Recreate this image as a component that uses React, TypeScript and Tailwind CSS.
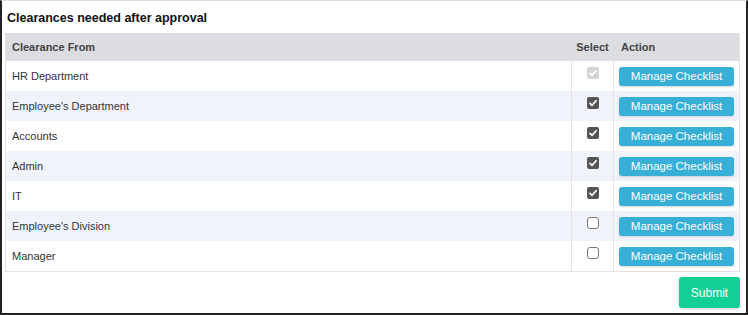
import React from "react";

type Row = { name: string; state: "disabled" | "checked" | "unchecked" };

const rows: Row[] = [
  { name: "HR Department", state: "disabled" },
  { name: "Employee's Department", state: "checked" },
  { name: "Accounts", state: "checked" },
  { name: "Admin", state: "checked" },
  { name: "IT", state: "checked" },
  { name: "Employee's Division", state: "unchecked" },
  { name: "Manager", state: "unchecked" },
];

function Box({ state }: { state: Row["state"] }) {
  if (state === "unchecked") {
    return <span className="block w-[12px] h-[12px] rounded-[3px] border border-[#777] bg-white" />;
  }
  const bg = state === "disabled" ? "bg-[#d4d4d4]" : "bg-[#555555]";
  return (
    <span className={`flex items-center justify-center w-[12px] h-[12px] rounded-[2px] ${bg}`}>
      <svg width="10" height="10" viewBox="0 0 10 10">
        <path d="M2 5.3 L4.1 7.3 L8.1 2.7" fill="none" stroke="white" strokeWidth="1.7" strokeLinecap="round" strokeLinejoin="round" />
      </svg>
    </span>
  );
}

export default function App() {
  return (
    <div
      className="w-[748px] h-[315px] bg-white border-l-2 border-r-2 border-b-2 border-t border-l-[#222] border-r-[#222] border-b-[#222] border-t-[#ddd] flex flex-col text-[#333]"
      style={{ fontFamily: '"Liberation Sans", Arial, sans-serif' }}
    >
      <div className="pl-[5px] pt-[10px] h-[32px] text-[12.5px] font-bold text-[#111] leading-[15px]">
        Clearances needed after approval
      </div>
      <div className="ml-[3px] w-[735px] border border-[#e3e3e3] border-t-0">
        <div className="flex h-[28px] bg-[#dcdde1] text-[11px] font-bold text-[#444] items-center">
          <div className="w-[565px] pl-[6px]">Clearance From</div>
          <div className="w-[43px] text-center">Select</div>
          <div className="flex-1 pl-[7px]">Action</div>
        </div>
        {rows.map((r, i) => (
          <div key={r.name} className={`flex h-[30px] text-[11px] ${i % 2 === 1 ? "bg-[#f0f3fa]" : "bg-white"}`}>
            <div className="w-[565px] pl-[6px] flex items-center">{r.name}</div>
            <div className="w-[43px] border-l border-r border-[#e3e3e3] flex justify-center pt-[6px]">
              <Box state={r.state} />
            </div>
            <div className="flex-1 pl-[5px] flex items-center">
              <button className="w-[115px] h-[19px] rounded-[3px] bg-[#38afd6] text-white text-[11.5px] leading-[19px] shadow-[0_1px_2px_rgba(0,0,0,0.15)]">
                Manage Checklist
              </button>
            </div>
          </div>
        ))}
      </div>
      <div className="flex justify-end pr-[6px] pt-[5px]">
        <button className="w-[61px] h-[31px] rounded-[3px] bg-[#12cf95] text-white text-[12px] shadow-[0_1px_3px_rgba(0,0,0,0.2)]">
          Submit
        </button>
      </div>
    </div>
  );
}
